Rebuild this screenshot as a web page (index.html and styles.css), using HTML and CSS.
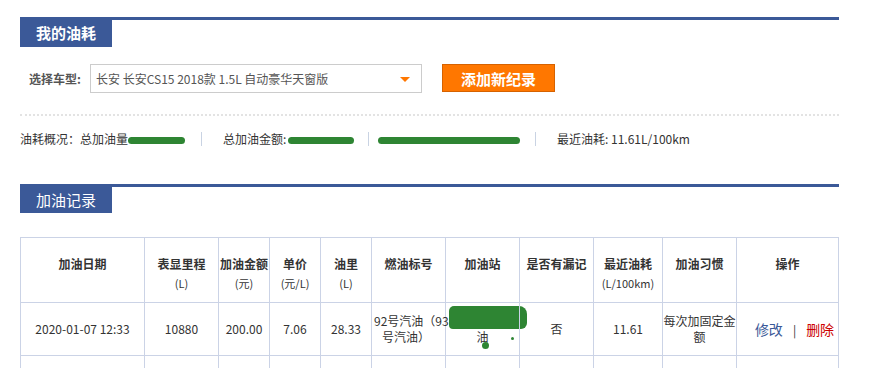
FILE: index.html
```html
<!DOCTYPE html>
<html lang="zh-CN">
<head>
    <meta charset="UTF-8">
    <title>我的油耗</title>
    <link rel="stylesheet" href="styles.css">
</head>
<body>
<div class="wrap">

    <div class="sec-head">
        <div class="tab bold">我的油耗</div>
    </div>

    <div class="car-row">
        <label class="car-label">选择车型:</label>
        <div class="select">
            <span>长安 长安CS15 2018款 1.5L 自动豪华天窗版</span>
            <i class="caret"></i>
        </div>
        <button class="add-btn">添加新纪录</button>
    </div>

    <div class="dots"></div>

    <div class="stats">
        <div class="stat s1">油耗概况：总加油量<span class="redact r1"></span></div>
        <div class="stat s2">总加油金额:<span class="redact r2"></span></div>
        <div class="stat s3"><span class="redact r3"></span></div>
        <div class="stat s4">最近油耗: 11.61L/100km</div>
    </div>

    <div class="sec-head sec2">
        <div class="tab">加油记录</div>
    </div>

    <table class="records">
        <colgroup>
            <col style="width:124px"><col style="width:74px"><col style="width:51px">
            <col style="width:51px"><col style="width:51px"><col style="width:74px">
            <col style="width:74px"><col style="width:74px"><col style="width:69px">
            <col style="width:74px"><col style="width:102px">
        </colgroup>
        <thead>
            <tr>
                <th>加油日期</th>
                <th>表显里程<small>(L)</small></th>
                <th>加油金额<small>(元)</small></th>
                <th>单价<small>(元/L)</small></th>
                <th>油里<small>(L)</small></th>
                <th>燃油标号</th>
                <th>加油站</th>
                <th>是否有漏记</th>
                <th>最近油耗<small>(L/100km)</small></th>
                <th>加油习惯</th>
                <th>操作</th>
            </tr>
        </thead>
        <tbody>
            <tr>
                <td>2020-01-07 12:33</td>
                <td>10880</td>
                <td>200.00</td>
                <td>7.06</td>
                <td>28.33</td>
                <td class="fuel">92号汽油（93<br>&nbsp;&nbsp;&nbsp;号汽油）</td>
                <td class="station">
                    <div class="blob"></div>
                    <div class="st-name">油<i class="dot big"></i><i class="dot small"></i></div>
                </td>
                <td>否</td>
                <td>11.61</td>
                <td class="habit">每次加固定金<br>额</td>
                <td class="ops"><a class="edit">修改</a><span class="bar">|</span><a class="del">删除</a></td>
            </tr>
            <tr class="empty">
                <td></td><td></td><td></td><td></td><td></td><td></td>
                <td></td><td></td><td></td><td></td><td></td>
            </tr>
        </tbody>
    </table>

</div>
</body>
</html>
```

FILE: styles.css
```css
* {
    margin: 0;
    padding: 0;
    box-sizing: border-box;
}

body {
    font-family: "Noto Sans CJK SC", "Liberation Sans", sans-serif;
    font-size: 12px;
    color: #333;
    background: #fff;
}

.wrap {
    width: 819px;
    margin-left: 20px;
    padding-top: 17px;
}

/* section header with blue tab */
.sec-head {
    border-top: 3px solid #3b5998;
}

.tab {
    width: 92px;
    height: 27px;
    line-height: 26px;
    background: #3b5998;
    color: #fff;
    font-size: 15px;
    text-align: center;
}

.tab.bold {
    font-weight: bold;
}

.sec2 {
    margin-top: 37px;
}

.sec2 .tab {
    height: 26px;
    line-height: 25px;
}

/* car select row */
.car-row {
    display: flex;
    align-items: flex-start;
    margin-top: 17px;
    height: 29px;
}

.car-label {
    width: 70px;
    padding-left: 9px;
    line-height: 29px;
    font-weight: bold;
    color: #555;
}

.select {
    position: relative;
    width: 332px;
    height: 29px;
    border: 1px solid #ccc;
    padding-left: 5px;
    line-height: 27px;
    color: #555;
}

.caret {
    position: absolute;
    right: 11px;
    top: 12px;
    width: 0;
    height: 0;
    border-left: 5px solid transparent;
    border-right: 5px solid transparent;
    border-top: 5px solid #ff7700;
}

.add-btn {
    margin-left: 20px;
    width: 113px;
    height: 28px;
    background: #ff7700;
    border: 1px solid #d66200;
    color: #fff;
    font-family: inherit;
    font-size: 15px;
    font-weight: bold;
}

.dots {
    margin-top: 21px;
    border-top: 2px dotted #e3e3e3;
}

/* stats line */
.stats {
    display: flex;
    margin-top: 15px;
    line-height: 16px;
}

.stat {
    position: relative;
    white-space: nowrap;
}

.s1 { width: 182px; }
.s2 { width: 146px; margin-left: 21px; }
.s3 { width: 158px; margin-left: 9px; }
.s4 { margin-left: 21px; }

.s1::after, .s2::after, .s3::after {
    content: "";
    position: absolute;
    right: 0;
    top: 1px;
    height: 14px;
    border-right: 1px solid #c9d3e3;
}

.redact {
    display: inline-block;
    vertical-align: middle;
    height: 7px;
    background: #2e8533;
    border-radius: 4px;
}

.r1 { width: 57px; }
.r2 { width: 66px; margin-left: 2px; }
.r3 { width: 142px; }

/* records table */
.records {
    margin-top: 24px;
    width: 819px;
    table-layout: fixed;
    border-collapse: collapse;
}

.records th, .records td {
    border: 1px solid #cbd3e6;
    text-align: center;
}

.records th {
    height: 65px;
    vertical-align: top;
    padding-top: 16px;
    font-size: 12px;
    line-height: 20px;
    font-weight: bold;
    color: #333;
    white-space: nowrap;
}

.records th small {
    display: block;
    font-size: 11px;
    font-weight: normal;
    line-height: 18px;
}

.records td {
    height: 53px;
    line-height: 16px;
    padding: 0;
}

.records .fuel {
    text-align: left;
    padding-left: 2px;
    white-space: nowrap;
}

.records .station {
    vertical-align: top;
    padding-top: 3px;
}

.blob {
    width: 78px;
    height: 23px;
    margin-left: 3px;
    background: #2e8533;
    border-radius: 5px 8px 6px 4px;
}

.st-name {
    position: relative;
}

.dot {
    position: absolute;
    background: #2e8533;
    border-radius: 50%;
}

.dot.big {
    width: 7px;
    height: 7px;
    left: 36px;
    top: 13px;
}

.dot.small {
    width: 3px;
    height: 3px;
    left: 65px;
    top: 8px;
}

.records .ops {
    padding-left: 14px;
    font-size: 14px;
}

.edit {
    color: #3b5998;
}

.bar {
    margin: 0 10px;
    color: #333;
    font-size: 12px;
}

.del {
    color: #c00;
}

.records .empty td {
    height: 30px;
}
```
